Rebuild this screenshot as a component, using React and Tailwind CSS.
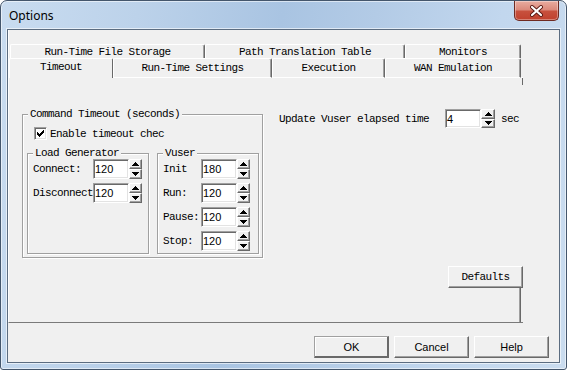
import React from "react";

const MONO =
  "font-['Liberation_Mono',monospace] text-[11px] leading-[12px] tracking-[-0.6px] text-black whitespace-nowrap";
const SANS = "font-['Liberation_Sans',Arial,sans-serif] text-[11px] leading-[14px] text-black";
const RAISED =
  "bg-[#f0f0f0] border border-t-white border-l-white border-b-[#696969] border-r-[#696969] shadow-[inset_-1px_-1px_0_#a0a0a0]";
const SUNKEN =
  "bg-white border border-t-[#a0a0a0] border-l-[#a0a0a0] border-b-white border-r-white shadow-[inset_1px_1px_0_#696969,inset_-1px_-1px_0_#e3e3e3]";

function Arrow({ down }) {
  const rows = [
    [3, 1],
    [2, 3],
    [1, 5],
    [0, 7],
  ];
  const r = down ? [...rows].reverse() : rows;
  return (
    <svg width="7" height="4" viewBox="0 0 7 4" shapeRendering="crispEdges">
      {r.map(([x, w], i) => (
        <rect key={i} x={x} y={i} width={w} height="1" fill="#000" />
      ))}
    </svg>
  );
}

function Spin({ value, tall = true }) {
  return (
    <div className={tall ? "flex h-[20px]" : "flex h-[19px]"}>
      <div className={`w-[36px] h-full ${SUNKEN} flex items-center pl-[1px] ${SANS}`}>{value}</div>
      <div className={tall ? "w-[13px] h-full flex flex-col" : "w-[14px] h-full flex flex-col"}>
        <div className={`flex-1 ${RAISED} flex items-center justify-center`}>
          <Arrow />
        </div>
        <div className={`flex-1 ${RAISED} flex items-center justify-center`}>
          <Arrow down />
        </div>
      </div>
    </div>
  );
}

function Group({ title, className, children }) {
  return (
    <fieldset
      className={`border border-[#a0a0a0] shadow-[inset_1px_1px_0_#fff,1px_1px_0_#fff] min-w-0 ${className}`}
    >
      <legend className={`ml-[5px] px-[2px] bg-[#f0f0f0] ${MONO}`}>{title}</legend>
      {children}
    </fieldset>
  );
}

function Row({ label, labelW, value }) {
  return (
    <div className="flex items-center pl-[5px]">
      <div className={`${labelW} overflow-hidden ${MONO}`}>{label}</div>
      <Spin value={value} />
    </div>
  );
}

const BACK_TAB =
  "h-[14px] flex items-center justify-center bg-[#f0f0f0] border-t border-l border-r border-t-white border-l-white border-r-[#696969] shadow-[inset_-1px_0_0_#a0a0a0] rounded-t-[2px]";
const FRONT_TAB =
  "h-[20px] flex items-center justify-center bg-[#f0f0f0] border-t border-l border-r border-b border-t-white border-l-white border-b-white border-r-[#696969] shadow-[inset_-1px_0_0_#a0a0a0] rounded-t-[2px]";

export default function App() {
  return (
    <div className="w-[567px] h-[370px] overflow-hidden flex flex-col border border-[#44566c] rounded-t-[7px] rounded-b-[3px] bg-[linear-gradient(100deg,#c9dcf0_0%,#bcd2ea_22%,#a9c4e2_45%,#b3cbe6_60%,#c2d7ee_80%,#cadcef_100%)] shadow-[inset_0_0_0_1px_rgba(255,255,255,0.55)]">
      {/* title bar */}
      <div className="h-[28px] flex items-start justify-between">
        <div className="pl-[8px] pt-[7px] font-['Noto_Sans',sans-serif] text-[12px] leading-[16px] text-black">
          Options
        </div>
        <div className="mr-[7px] w-[45px] h-[20px] rounded-b-[5px] border border-t-0 border-[#6e2a22] bg-[linear-gradient(180deg,#e9aca0_0%,#dc8a7c_45%,#c7503d_55%,#c0412e_100%)] shadow-[inset_0_0_0_1px_rgba(255,255,255,0.35)] flex items-center justify-center">
          <svg width="13" height="12" viewBox="0 0 13 12">
            <path d="M2 2 L11 10 M11 2 L2 10" stroke="#5a1a14" strokeWidth="4" strokeLinecap="round" />
            <path d="M2 2 L11 10 M11 2 L2 10" stroke="#ffffff" strokeWidth="2.2" strokeLinecap="round" />
          </svg>
        </div>
      </div>

      {/* client area */}
      <div className="ml-[6px] w-[553px] h-[334px] border border-[#5b6c80] bg-[#f0f0f0] shadow-[0_0_0_1px_rgba(255,255,255,0.6)] flex flex-col">
        {/* property page */}
        <div className="w-[515px] h-[293px] border-l border-b border-l-white border-b-[#7a7a7a] flex flex-col">
          {/* tab row 1 */}
          <div className="mt-[14px] ml-[1px] flex">
            <div className={`w-[195px] ${BACK_TAB} ${MONO}`}>Run-Time File Storage</div>
            <div className={`w-[200px] ${BACK_TAB} ${MONO}`}>Path Translation Table</div>
            <div className={`w-[116px] ${BACK_TAB} ${MONO}`}>Monitors</div>
          </div>
          {/* tab row 2 */}
          <div className="flex">
            <div className="w-[104px] h-[20px] flex items-center justify-center pb-[3px] bg-[#f0f0f0] border-t border-l border-r border-t-white border-l-white border-r-[#696969] rounded-t-[2px]">
              <span className={MONO}>Timeout</span>
            </div>
            <div className={`w-[159px] ${FRONT_TAB} ${MONO}`}>Run-Time Settings</div>
            <div className={`w-[113px] ${FRONT_TAB} ${MONO}`}>Execution</div>
            <div className={`w-[136px] ${FRONT_TAB} ${MONO}`}>WAN Emulation</div>
            <div className="w-[2px] h-[20px] border-b border-b-white" />
          </div>
          <div className="h-[7px] flex justify-end">
            <div className="w-[1px] h-full bg-[#696969]" />
          </div>

          {/* page content */}
          <div className="flex items-start">
            <Group title="Command Timeout (seconds)" className="ml-[13px] mt-[23px] w-[244px] h-[150px]">
              <div className="mt-[7px] ml-[11px] flex items-center gap-[3px]">
                <div className={`w-[13px] h-[13px] ${SUNKEN} flex items-center justify-center`}>
                  <svg width="7" height="7" viewBox="0 0 7 7" shapeRendering="crispEdges">
                    <rect x="6" y="0" width="1" height="3" fill="#000" />
                    <rect x="5" y="1" width="1" height="3" fill="#000" />
                    <rect x="4" y="2" width="1" height="3" fill="#000" />
                    <rect x="3" y="3" width="1" height="3" fill="#000" />
                    <rect x="2" y="4" width="1" height="3" fill="#000" />
                    <rect x="1" y="3" width="1" height="3" fill="#000" />
                    <rect x="0" y="2" width="1" height="3" fill="#000" />
                  </svg>
                </div>
                <span className={MONO}>Enable timeout chec</span>
              </div>
              <div className="mt-[7px] ml-[4px] flex gap-[8px]">
                <Group title="Load Generator" className="w-[122px] h-[107px]">
                  <div className="flex flex-col gap-[4px]">
                    <Row label="Connect:" labelW="w-[60px]" value="120" />
                    <Row label="Disconnect" labelW="w-[60px]" value="120" />
                  </div>
                </Group>
                <Group title="Vuser" className="w-[102px] h-[107px]">
                  <div className="flex flex-col gap-[4px]">
                    <Row label="Init" labelW="w-[38px]" value="180" />
                    <Row label="Run:" labelW="w-[38px]" value="120" />
                    <Row label="Pause:" labelW="w-[38px]" value="120" />
                    <Row label="Stop:" labelW="w-[38px]" value="120" />
                  </div>
                </Group>
              </div>
            </Group>

            <div className="ml-[16px] mt-[24px] flex flex-col">
              <div className="flex items-center h-[19px]">
                <div className={`w-[166px] ${MONO}`}>Update Vuser elapsed time</div>
                <Spin value="4" tall={false} />
                <div className={`ml-[6px] ${MONO}`}>sec</div>
              </div>
              <div className={`mt-[138px] ml-[169px] w-[75px] h-[22px] ${RAISED} flex items-center justify-center ${MONO}`}>
                Defaults
              </div>
              <div className="ml-[240px] w-[2px] h-[34px] border-l border-l-[#a0a0a0] bg-[#696969]" />
            </div>
          </div>
        </div>

        {/* dialog buttons */}
        <div className="pt-[13px] pr-[10px] flex justify-end gap-[5px]">
          <div className={`w-[75px] h-[22px] bg-[#f0f0f0] border border-t-[#a0a0a0] border-l-[#a0a0a0] border-b-[#696969] border-r-[#696969] shadow-[inset_-1px_-1px_0_#696969,inset_1px_1px_0_#fff] flex items-center justify-center ${SANS}`}>
            OK
          </div>
          <div className={`w-[75px] h-[22px] ${RAISED} flex items-center justify-center ${SANS}`}>Cancel</div>
          <div className={`w-[75px] h-[22px] ${RAISED} flex items-center justify-center ${SANS}`}>Help</div>
        </div>
      </div>
    </div>
  );
}
